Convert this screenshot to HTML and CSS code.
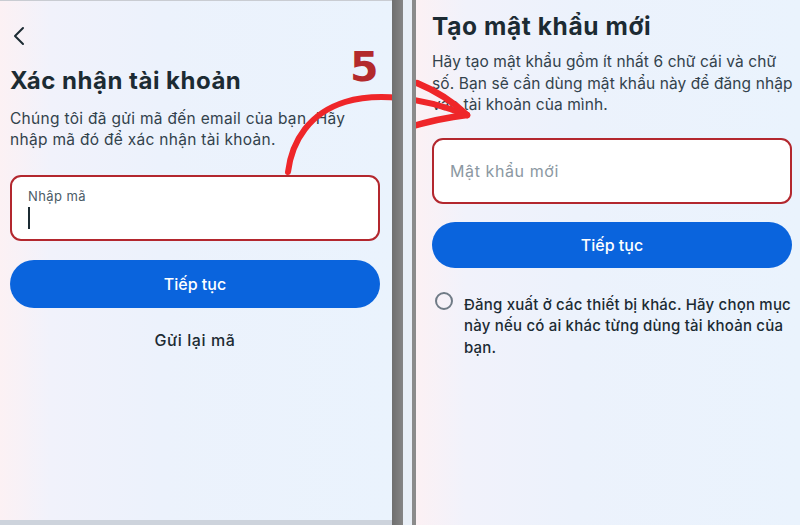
FILE: index.html
```html
<!DOCTYPE html>
<html lang="vi">
<head>
  <meta charset="UTF-8" />
  <meta name="viewport" content="width=device-width, initial-scale=1.0"/>
  <title>Đặt lại mật khẩu</title>
  <link rel="stylesheet" href="styles.css">
</head>
<body>

  <div class="screens">

    <!-- Bước 1: nhập mã xác nhận -->
    <section class="screen screen-left">
      <button class="back" aria-label="Quay lại">
        <svg width="14" height="20" viewBox="0 0 14 20">
          <path d="M11 2 L3 10 L11 18" fill="none" stroke="#1c2b33" stroke-width="2" stroke-linecap="round" stroke-linejoin="round"/>
        </svg>
      </button>

      <h1 class="title">Xác nhận tài khoản</h1>
      <p class="desc">Chúng tôi đã gửi mã đến email của bạn. Hãy nhập mã đó để xác nhận tài khoản.</p>

      <label class="field field-code">
        <span class="field-label">Nhập mã</span>
        <span class="caret"></span>
      </label>

      <button class="primary">Tiếp tục</button>
      <a class="link" href="#">Gửi lại mã</a>
    </section>

    <div class="divider">
      <span class="divider-dark"></span>
      <span class="divider-light"></span>
      <span class="divider-thin"></span>
    </div>

    <!-- Bước 2: tạo mật khẩu mới -->
    <section class="screen screen-right">
      <h1 class="title title-lg">Tạo mật khẩu mới</h1>
      <p class="desc desc-r">Hãy tạo mật khẩu gồm ít nhất 6 chữ cái và chữ số. Bạn sẽ cần dùng mật khẩu này để đăng nhập vào tài khoản của mình.</p>

      <label class="field field-pass">
        <span class="placeholder">Mật khẩu mới</span>
      </label>

      <button class="primary primary-r">Tiếp tục</button>

      <div class="check">
        <span class="radio"></span>
        <span class="check-text">Đăng xuất ở các thiết bị khác. Hãy chọn mục này nếu có ai khác từng dùng tài khoản của bạn.</span>
      </div>
    </section>

  </div>

  <!-- chú thích bước -->
  <span class="step">5</span>
  <svg class="arrow" width="800" height="525" viewBox="0 0 800 525">
    <g fill="none" stroke="#ef2629" stroke-linecap="round" stroke-linejoin="round">
      <path d="M288 172 C292 140 310 113 345 102 C375 93 420 96 466 115" stroke-width="6"/>
      <path d="M417 83 Q446 95 467 115" stroke-width="6.5"/>
      <path d="M406 128 Q440 118 467 115" stroke-width="6.5"/>
    </g>
  </svg>

</body>
</html>
```

FILE: styles.css
```css
body {
  margin: 0;
  width: 800px;
  height: 525px;
  overflow: hidden;
  position: relative;
  font-family: 'Inter', 'Noto Sans', sans-serif;
  color: #1c2b33;
  background-color: #ebf2fc;
}

.screens {
  display: flex;
  height: 525px;
}

.screen {
  display: flex;
  flex-direction: column;
  box-sizing: border-box;
  background: linear-gradient(90deg, #fcf1f4 0, #f1f2fb 50px, #ecf2fc 160px, #eaf3fd 100%);
}

.screen-left {
  width: 392px;
  height: 525px;
  padding: 0 12px 0 10px;
  border-top: 1px solid #c9ccd2;
  border-bottom: 5px solid #cdd3dc;
}

.screen-right {
  flex: 1;
  padding: 0 8px 0 16px;
}

.back {
  margin: 25px 0 0 2px;
  padding: 0;
  border: none;
  background: none;
  width: 14px;
  height: 20px;
  align-self: flex-start;
}

.title {
  margin: 21px 0 0;
  font-size: 24px;
  line-height: 28px;
  font-weight: 700;
  letter-spacing: 0.5px;
}

.title-lg {
  margin-top: 11px;
  font-size: 24.5px;
  line-height: 30px;
  letter-spacing: 0.6px;
}

.desc {
  margin: 13px 0 0;
  font-size: 15.5px;
  line-height: 21px;
  letter-spacing: 0.3px;
  color: #33424c;
}

.desc-r {
  margin: 10px -4px 0 0;
  line-height: 21.5px;
  letter-spacing: 0.1px;
}

.field {
  display: flex;
  flex-direction: column;
  box-sizing: border-box;
  height: 66px;
  background: #fff;
  border: 2px solid #b3272e;
  border-radius: 11px;
}

.field-code {
  margin-top: 25px;
  padding: 11px 16px 0;
}

.field-label {
  font-size: 13px;
  line-height: 16px;
  letter-spacing: 0.4px;
  color: #4b5b66;
}

.caret {
  width: 2px;
  height: 22px;
  margin-top: 3px;
  background: #1c2b33;
}

.field-pass {
  margin-top: 22px;
  padding: 0 16px;
  justify-content: center;
}

.placeholder {
  font-size: 16px;
  letter-spacing: 0.6px;
  color: #8b98a2;
}

.primary {
  margin-top: 19px;
  height: 48px;
  border: none;
  border-radius: 24px;
  background-color: #0a64dd;
  color: #fff;
  font-family: inherit;
  font-size: 16px;
  font-weight: 500;
}

.primary-r {
  margin-top: 18px;
  height: 46px;
}

.link {
  margin-top: 22px;
  align-self: center;
  font-size: 16px;
  line-height: 20px;
  font-weight: 500;
  letter-spacing: 0.6px;
  color: #1c2b33;
  text-decoration: none;
}

.check {
  display: flex;
  align-items: flex-start;
  gap: 11px;
  margin: 26px -3px 0 0;
}

.radio {
  flex: none;
  box-sizing: border-box;
  width: 18px;
  height: 18px;
  margin: -2px 0 0 3px;
  border: 2px solid #707b86;
  border-radius: 50%;
}

.check-text {
  font-size: 15px;
  line-height: 21.5px;
  font-weight: 500;
  letter-spacing: 0.2px;
}

/* khe giữa hai màn hình */
.divider {
  display: flex;
  width: 24px;
  position: relative;
  z-index: 2;
}

.divider-dark {
  width: 11px;
  background: linear-gradient(90deg, #6f6f6f, #858585);
}

.divider-light {
  width: 9px;
  background: #e9eff7;
}

.divider-thin {
  width: 4px;
  background: #8b8b8b;
}

.step {
  position: absolute;
  left: 350px;
  top: 47px;
  font-family: 'DejaVu Sans', sans-serif;
  font-weight: 700;
  font-size: 41px;
  line-height: 41px;
  color: #b32a2c;
}

.arrow {
  position: absolute;
  left: 0;
  top: 0;
  z-index: 1;
  pointer-events: none;
}
```
